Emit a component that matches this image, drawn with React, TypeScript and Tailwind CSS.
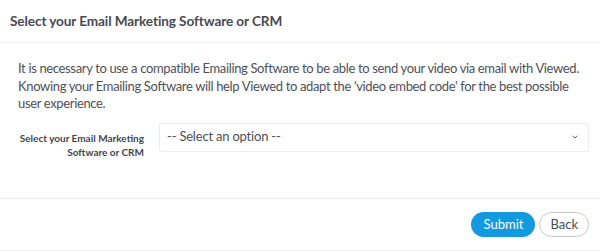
import { ChevronDown } from "lucide-react";

export default function App() {
  return (
    <div
      className="w-[600px] h-[251px] bg-white text-[#55555d] flex flex-col"
      style={{ fontFamily: 'Lato, "Noto Sans", sans-serif' }}
    >
      <div className="h-[43px] flex items-center px-[10px] border-b border-[#ededed] shrink-0">
        <h2 className="text-[13.6px] font-bold text-[#4a4a52] tracking-[-0.1px]">
          Select your Email Marketing Software or CRM
        </h2>
      </div>
      <div className="flex-1 pl-[18px] pr-[11px] pt-[17px]">
        <p className="text-[13px] leading-[17.5px] text-[#505058] tracking-[-0.35px] whitespace-nowrap">
          It is necessary to use a compatible Emailing Software to be able to send your video via email with Viewed.
          <br />
          Knowing your Emailing Software will help Viewed to adapt the 'video embed code' for the best possible
          <br />
          user experience.
        </p>
        <div className="flex gap-[15px] mt-[10px]">
          <label className="w-[126px] shrink-0 text-right text-[10px] leading-[14px] font-bold text-[#45454d] pt-[8px]">
            Select your Email Marketing Software or CRM
          </label>
          <div className="flex-1 h-[29px] border border-[#ececec] rounded-[3px] flex items-center justify-between pl-[7px] pr-[9px]">
            <span className="text-[13px] text-[#505058] tracking-[-0.2px]">-- Select an option --</span>
            <ChevronDown className="w-[8px] h-[8px] text-[#666]" strokeWidth={3} />
          </div>
        </div>
      </div>
      <div className="h-[53px] shrink-0 border-t border-b border-[#ededed] flex items-center justify-end gap-[4px] pr-[11px]">
        <button className="h-[25px] px-[12px] rounded-full bg-[#1299de] text-white text-[13px]">
          Submit
        </button>
        <button className="h-[25px] px-[10px] rounded-full border border-[#c9c9c9] text-[#4a4a52] text-[13px]">
          Back
        </button>
      </div>
    </div>
  );
}
